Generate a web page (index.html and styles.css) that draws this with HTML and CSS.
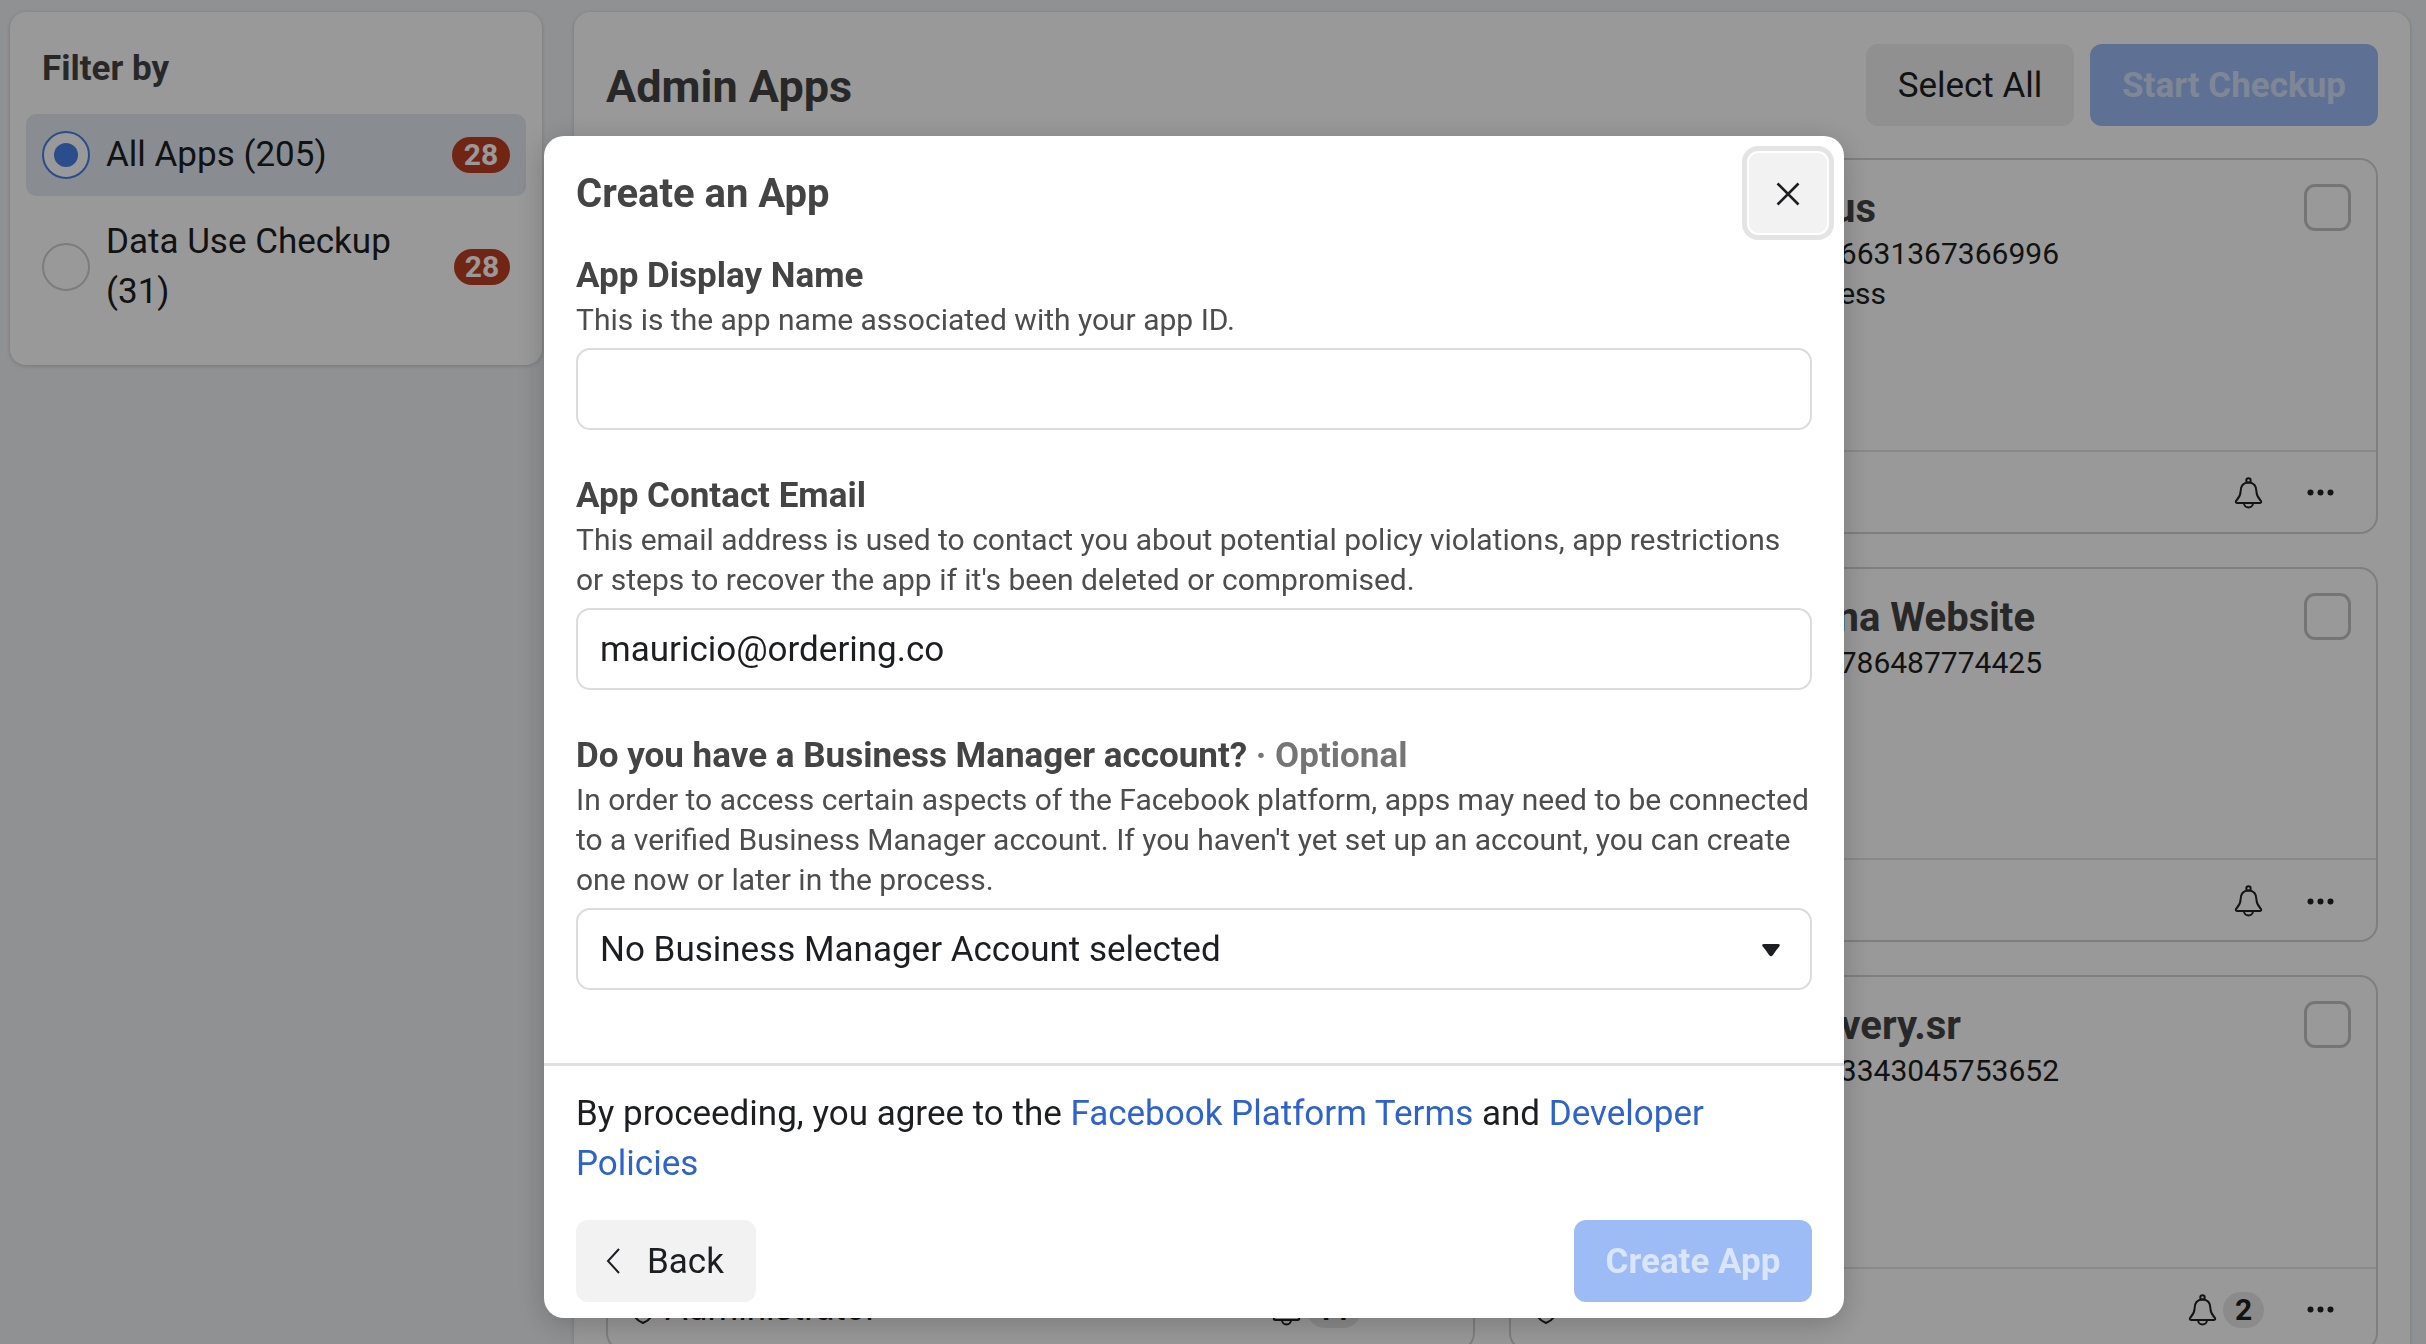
FILE: index.html
```html
<!DOCTYPE html>
<html lang="en">
<head>
<meta charset="utf-8">
<title>Create an App</title>
<link rel="stylesheet" href="styles.css">
</head>
<body>
<div class="page">
  <aside class="sidebar">
    <h2 class="filter-title">Filter by</h2>
    <div class="filter-row selected">
      <span class="radio on"><span class="radio-dot"></span></span>
      <span class="filter-text">All Apps (205)</span>
      <span class="count count-wide">28</span>
    </div>
    <div class="filter-row tall">
      <span class="radio"></span>
      <span class="filter-text">Data Use Checkup (31)</span>
      <span class="count">28</span>
    </div>
  </aside>
  <main class="main">
    <header class="main-head">
      <h1 class="main-title">Admin Apps</h1>
      <div class="main-actions">
        <button class="btn-select">Select All</button>
        <button class="btn-start">Start Checkup</button>
      </div>
    </header>
    <section class="grid">
      <article class="card">
        <div class="card-body"></div>
        <div class="card-foot"><span class="foot-grow"></span>
          <svg class="bell" viewBox="0 0 29 32"><use href="#bell-shape"/></svg>
          <svg class="dots" viewBox="0 0 27 7"><circle cx="3.5" cy="3.5" r="3"/><circle cx="13.5" cy="3.5" r="3"/><circle cx="23.5" cy="3.5" r="3"/></svg>
        </div>
      </article>
      <article class="card">
        <div class="card-body">
          <div class="lines">
            <div class="name w-us">us</div>
            <div class="meta w-a">6631367366996</div>
            <div class="meta w-ess">ess</div>
          </div>
          <span class="check"></span>
        </div>
        <div class="card-foot"><span class="foot-grow"></span>
          <svg class="bell" viewBox="0 0 29 32"><use href="#bell-shape"/></svg>
          <svg class="dots" viewBox="0 0 27 7"><circle cx="3.5" cy="3.5" r="3"/><circle cx="13.5" cy="3.5" r="3"/><circle cx="23.5" cy="3.5" r="3"/></svg>
        </div>
      </article>
      <article class="card">
        <div class="card-body"></div>
        <div class="card-foot"><span class="foot-grow"></span>
          <svg class="bell" viewBox="0 0 29 32"><use href="#bell-shape"/></svg>
          <svg class="dots" viewBox="0 0 27 7"><circle cx="3.5" cy="3.5" r="3"/><circle cx="13.5" cy="3.5" r="3"/><circle cx="23.5" cy="3.5" r="3"/></svg>
        </div>
      </article>
      <article class="card">
        <div class="card-body">
          <div class="lines">
            <div class="name w-web">na Website</div>
            <div class="meta w-b">786487774425</div>
          </div>
          <span class="check"></span>
        </div>
        <div class="card-foot"><span class="foot-grow"></span>
          <svg class="bell" viewBox="0 0 29 32"><use href="#bell-shape"/></svg>
          <svg class="dots" viewBox="0 0 27 7"><circle cx="3.5" cy="3.5" r="3"/><circle cx="13.5" cy="3.5" r="3"/><circle cx="23.5" cy="3.5" r="3"/></svg>
        </div>
      </article>
      <article class="card">
        <div class="card-body"></div>
        <div class="card-foot">
          <svg class="shield" viewBox="0 0 24 30"><path d="M12 2 L22 6 V15 C22 22 17 26 12 28 C7 26 2 22 2 15 V6 Z"/></svg>
          <span class="role">Administrator</span>
          <span class="foot-grow"></span>
          <svg class="bell" viewBox="0 0 29 32"><use href="#bell-shape"/></svg>
          <span class="bell-count">11</span>
          <svg class="dots" viewBox="0 0 27 7"><circle cx="3.5" cy="3.5" r="3"/><circle cx="13.5" cy="3.5" r="3"/><circle cx="23.5" cy="3.5" r="3"/></svg>
        </div>
      </article>
      <article class="card">
        <div class="card-body">
          <div class="lines">
            <div class="name w-sr">very.sr</div>
            <div class="meta w-a">3343045753652</div>
          </div>
          <span class="check"></span>
        </div>
        <div class="card-foot">
          <svg class="shield" viewBox="0 0 24 30"><path d="M12 2 L22 6 V15 C22 22 17 26 12 28 C7 26 2 22 2 15 V6 Z"/></svg>
          <span class="role role-high">Administrator</span>
          <span class="foot-grow"></span>
          <svg class="bell" viewBox="0 0 29 32"><use href="#bell-shape"/></svg>
          <span class="bell-count">2</span>
          <svg class="dots" viewBox="0 0 27 7"><circle cx="3.5" cy="3.5" r="3"/><circle cx="13.5" cy="3.5" r="3"/><circle cx="23.5" cy="3.5" r="3"/></svg>
        </div>
      </article>
    </section>
  </main>
</div>

<div class="overlay"></div>

<div class="modal">
  <button class="close" aria-label="Close">
    <svg viewBox="0 0 24 24" class="close-x"><path d="M1.5 1.5 L22.5 22.5 M22.5 1.5 L1.5 22.5"/></svg>
  </button>
  <h2 class="modal-title">Create an App</h2>
  <div class="form">
    <div class="field">
      <div class="label">App Display Name</div>
      <div class="desc">This is the app name associated with your app ID.</div>
      <div class="input"></div>
    </div>
    <div class="field">
      <div class="label">App Contact Email</div>
      <div class="desc">This email address is used to contact you about potential policy violations, app restrictions<br>or steps to recover the app if it's been deleted or compromised.</div>
      <div class="input">mauricio@ordering.co</div>
    </div>
    <div class="field">
      <div class="label">Do you have a Business Manager account? <span class="optional">· Optional</span></div>
      <div class="desc">In order to access certain aspects of the Facebook platform, apps may need to be connected<br>to a verified Business Manager account. If you haven't yet set up an account, you can create<br>one now or later in the process.</div>
      <div class="input select">No Business Manager Account selected
        <svg class="caret" viewBox="0 0 18 13"><path d="M2 0 H16 Q18.5 0 17.5 2.2 Q14 6 11 11 Q9 13.5 7 11 Q4 6 .5 2.2 Q-.5 0 2 0 Z"/></svg>
      </div>
    </div>
  </div>
  <div class="modal-foot">
    <p class="terms">By proceeding, you agree to the <a href="#">Facebook Platform Terms</a> and <a href="#">Developer</a> <a href="#">Policies</a></p>
    <div class="modal-actions">
      <button class="btn-back">
        <svg class="chev" viewBox="0 0 14 26"><path d="M13 1 L2 13 L13 25"/></svg>
        Back
      </button>
      <button class="btn-create">Create App</button>
    </div>
  </div>
</div>

<svg class="defs" width="0" height="0">
  <defs>
    <g id="bell-shape" fill="none" stroke="#222" stroke-width="2">
      <circle cx="14.5" cy="3.4" r="2.2"/>
      <path d="M14.5 5.5 C8.5 5.5 6.5 10 6.5 15 C6.5 19.5 4 21.5 2 24 Q1.2 26 3.5 26 H25.5 Q27.8 26 27 24 C25 21.5 22.5 19.5 22.5 15 C22.5 10 20.5 5.5 14.5 5.5 Z"/>
      <path d="M10 26 C10 32 19 32 19 26"/>
    </g>
  </defs>
</svg>
</body>
</html>
```

FILE: styles.css
```css
* { box-sizing: border-box; }
html, body { margin: 0; height: 100%; overflow: hidden; }
body { background: #f0f2f5; font-family: Roboto, "Liberation Sans", sans-serif; color: #1c1e21; }
h1, h2, p { margin: 0; }
button { font-family: inherit; border: 0; padding: 0; }

.page { display: flex; align-items: flex-start; gap: 32px; padding: 12px 16px 0 10px; height: 100%; }

.sidebar { width: 532px; flex: none; background: #fff; border-radius: 16px; padding: 35px 16px 33px; box-shadow: 0 1px 4px rgba(0,0,0,.18); }
.filter-title { font-size: 35px; line-height: 44px; font-weight: 700; color: #444; padding-left: 16px; margin-bottom: 23px; }
.filter-row { display: flex; align-items: center; height: 82px; padding: 0 16px; border-radius: 10px; font-size: 35px; line-height: 49.5px; }
.filter-row.selected { background: #e4ebf2; margin-bottom: 5px; }
.filter-row.tall { height: 131px; }
.filter-text { flex: 1; padding: 0 12px 0 16px; }
.radio { flex: none; width: 48px; height: 48px; border-radius: 50%; border: 2.5px solid #ccd0d5; display: flex; align-items: center; justify-content: center; }
.radio.on { border-color: #4a80e8; background: #fff; }
.radio-dot { width: 24px; height: 24px; border-radius: 50%; background: #4a80e8; }
.count { flex: none; width: 56px; height: 36px; border-radius: 18px; background: #bd3e24; color: #fff; font-size: 30px; font-weight: 700; line-height: 36px; text-align: center; }
.count-wide { width: 58px; }

.main { flex: 1; align-self: stretch; background: #fff; border-radius: 16px 16px 0 0; padding: 32px 32px 0; min-height: 1400px; box-shadow: 0 1px 4px rgba(0,0,0,.18); }
.main-head { display: flex; justify-content: space-between; align-items: center; height: 82px; margin-bottom: 32px; }
.main-title { font-size: 45px; font-weight: 700; color: #444; line-height: 84px; margin-top: 4px; }
.main-actions { display: flex; gap: 16px; }
.btn-select { width: 208px; height: 82px; border-radius: 12px; background: #f0f0f0; color: #1c1e21; font-size: 35px; }
.btn-start { width: 288px; height: 82px; border-radius: 12px; background: #9dbbf5; color: #d4e2fb; font-size: 35px; font-weight: 700; }

.grid { display: grid; grid-template-columns: 1fr 1fr; column-gap: 34px; row-gap: 33px; grid-auto-rows: 375.5px; }
.card { display: flex; flex-direction: column; border: 2px solid #d4d4d4; border-radius: 18px; }
.card-body { flex: 1; display: flex; justify-content: space-between; align-items: flex-start; padding: 24px 25px 0 24px; }
.lines { flex: 1; }
.name { font-size: 40px; line-height: 50px; font-weight: 700; color: #444; text-align: right; }
.meta { font-size: 30px; line-height: 40px; color: #1c1e21; text-align: right; }
.w-us { width: 341px; }
.w-web { width: 500px; }
.w-sr { width: 426px; }
.w-a { width: 524px; }
.w-b { width: 507px; }
.w-ess { width: 351px; }
.check { flex: none; width: 47px; height: 47px; border: 3px solid #c4c4c4; border-radius: 11px; }
.card-foot { flex: none; height: 82px; border-top: 2px solid #e4e4e4; display: flex; align-items: center; padding: 2px 42px 0 23px; }
.foot-grow { flex: 1; }
.bell { width: 29px; height: 32px; flex: none; }
.dots { width: 27px; height: 7px; flex: none; margin-left: 44px; fill: #222; }
.bell-count { min-width: 41px; height: 36px; padding: 0 10px; margin-left: 6px; margin-right: -1px; border-radius: 18px; background: #e8e8e8; font-size: 30px; line-height: 36px; font-weight: 700; text-align: center; }
.shield { width: 24px; height: 30px; flex: none; fill: none; stroke: #222; stroke-width: 2; }
.role { font-size: 35px; margin: -3px 0 0 10px; color: #1c1e21; }
.role-high { margin-top: -6px; }

.overlay { position: fixed; inset: 0; background: rgba(0,0,0,.4); }

.modal { position: fixed; left: 544px; top: 136px; width: 1300px; height: 1182px; background: #fff; border-radius: 20px; padding: 0 32px; display: flex; flex-direction: column; box-shadow: 0 6px 30px rgba(0,0,0,.22); }
.close { position: absolute; right: 10px; top: 10px; width: 92px; height: 94px; border: 5px solid #e4e4e4; border-radius: 16px; background: #f2f2f2; box-shadow: inset 0 0 0 2px #fff; display: flex; align-items: center; justify-content: center; padding-top: 2px; }
.close-x { width: 24px; height: 24px; fill: none; stroke: #1c1e21; stroke-width: 2.6; }
.modal-title { font-size: 40px; line-height: 44px; font-weight: 700; color: #444; padding-top: 36px; height: 78px; margin-bottom: 38px; }
.form { display: flex; flex-direction: column; gap: 42px; }
.label { font-size: 35px; line-height: 44px; font-weight: 700; color: #444; padding-top: 2px; margin-bottom: 2px; }
.optional { color: #757575; font-weight: 700; }
.desc { font-size: 30px; line-height: 40px; color: #4d4d4d; margin-bottom: 8px; }
.input { height: 82px; border: 2px solid #dcdcdc; border-radius: 14px; padding: 0 22px; display: flex; align-items: center; justify-content: space-between; font-size: 35px; color: #1c1e21; }
.caret { width: 18px; height: 13px; fill: #1c1e21; margin: 3px 8px 0 0; }
.modal-foot { margin: 73px -32px 0; border-top: 3px solid #dfe0e4; padding: 23px 32px 16px; display: flex; flex-direction: column; flex: 1; }
.terms { font-size: 35px; line-height: 49.5px; color: #1c1e21; height: 99px; width: 1236px; }
.terms a { color: #2e62cc; text-decoration: none; }
.modal-actions { display: flex; justify-content: space-between; margin-top: auto; }
.btn-back { width: 180px; height: 82px; border-radius: 12px; background: #f2f2f2; color: #1c1e21; font-size: 35px; display: flex; align-items: center; padding-left: 30px; gap: 27px; }
.chev { width: 14px; height: 26px; fill: none; stroke: #1c1e21; stroke-width: 2; }
.btn-create { width: 238px; height: 82px; border-radius: 12px; background: #9dbbf5; color: #d9e5fb; font-size: 35px; font-weight: 700; }
.defs { position: absolute; }
```
